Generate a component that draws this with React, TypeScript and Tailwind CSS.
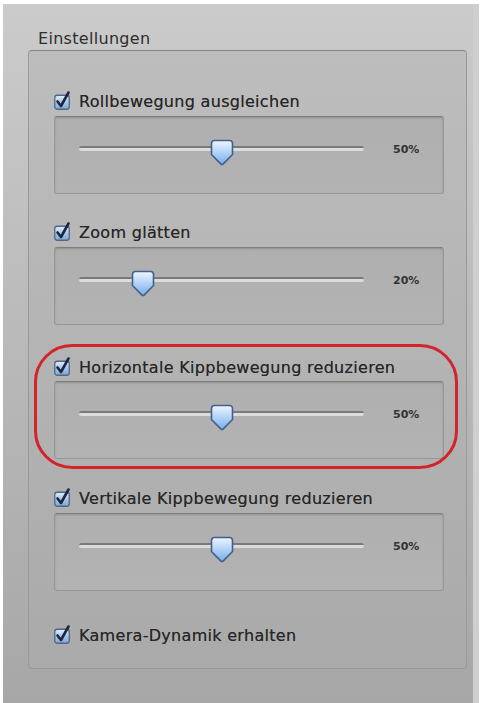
import React from "react"

const font = { fontFamily: '"DejaVu Sans", "Liberation Sans", sans-serif' }

function CheckBox() {
  return (
    <svg width="16" height="18" viewBox="0 0 16 18" className="overflow-visible shrink-0">
      <defs>
        <linearGradient id="cbfill" x1="0" y1="0" x2="0" y2="1">
          <stop offset="0" stopColor="#e3eefa" />
          <stop offset="0.5" stopColor="#a9c7e8" />
          <stop offset="1" stopColor="#7fa6d4" />
        </linearGradient>
      </defs>
      <rect x="0.75" y="3.25" width="14.5" height="14" rx="2.5" fill="url(#cbfill)" stroke="#4f6788" strokeWidth="1.3" />
      <path d="M3.5 9.5 L7 14 L14.5 0.5" fill="none" stroke="#1c2640" strokeWidth="2.6" strokeLinecap="round" strokeLinejoin="round" />
    </svg>
  )
}

function Thumb() {
  return (
    <svg width="24" height="27" viewBox="0 0 24 27">
      <defs>
        <linearGradient id="thfill" x1="0" y1="0" x2="0" y2="1">
          <stop offset="0" stopColor="#eef6ff" />
          <stop offset="0.45" stopColor="#b7d6f7" />
          <stop offset="1" stopColor="#78aeea" />
        </linearGradient>
      </defs>
      <path
        d="M4.5 1.5 H19.5 Q22.5 1.5 22.5 4.5 V15.5 L13.3 24.8 Q12 26 10.7 24.8 L1.5 15.5 V4.5 Q1.5 1.5 4.5 1.5 Z"
        fill="url(#thfill)"
        stroke="#44608a"
        strokeWidth="1.6"
      />
    </svg>
  )
}

// slider inside its own recessed box; the thumb sits over the track
function SliderBox({ value, className }: { value: number; className: string }) {
  return (
    <div
      className={`ml-[25px] h-[78px] w-[390px] rounded-[3px] border border-[#979797] border-t-[#7e7e7e] bg-gradient-to-b from-[#afafaf] to-[#b3b3b3] shadow-[inset_0_1px_2px_rgba(0,0,0,0.18)] flex items-start pt-[22px] pl-[24px] ${className}`}
    >
      <div className="relative w-[285px] h-[27px] pt-[7px]">
        <div className="h-[5px] rounded-full border-t-2 border-[#7a7a7a] bg-[#dcdcdc]" />
        <div className="absolute top-0" style={{ left: `calc(${value / 100} * (100% - 24px))` }}>
          <Thumb />
        </div>
      </div>
      <span className="ml-[29px] mt-[4px] text-[11px] font-bold text-[#333] leading-[14px]">{value}%</span>
    </div>
  )
}

function Row({ label, className }: { label: string; className: string }) {
  return (
    <div className={`ml-[25px] h-[20px] flex items-center gap-[9px] ${className}`}>
      <CheckBox />
      <span className="text-[16px] tracking-[0.3px] leading-[20px] text-[#262626] mt-[2px] [text-shadow:0_0_0.6px_rgba(0,0,0,0.5)]">
        {label}
      </span>
    </div>
  )
}

export default function App() {
  return (
    <div className="w-[482px] h-[703px] bg-white pt-[4px] pl-[3px] overflow-hidden" style={font}>
      <div className="w-[476px] h-[699px] bg-gradient-to-b from-[#cbcbcb] to-[#a7a7a7] border-r-[6px] border-[#cfcfcf] pt-[26px] pl-[25px]">
        <div className="ml-[10px] text-[16px] tracking-[0.3px] leading-[18px] text-[#2e2e2e]">Einstellungen</div>
        <div className="relative mt-[2px] w-[439px] h-[619px] rounded-[4px] border border-[#999] border-t-[#858585] bg-gradient-to-b from-[#bdbdbd] to-[#aaaaaa] flex flex-col">
          <Row label="Rollbewegung ausgleichen" className="mt-[40px]" />
          <SliderBox value={50} className="mt-[5px]" />
          <Row label="Zoom glätten" className="mt-[28px]" />
          <SliderBox value={20} className="mt-[5px]" />
          <Row label="Horizontale Kippbewegung reduzieren" className="mt-[32px]" />
          <SliderBox value={50} className="mt-[4px]" />
          <Row label="Vertikale Kippbewegung reduzieren" className="mt-[29px]" />
          <SliderBox value={50} className="mt-[5px]" />
          <Row label="Kamera-Dynamik erhalten" className="mt-[34px]" />

          {/* red highlight drawn over the third group */}
          <div className="absolute left-[5px] top-[293px] w-[424px] h-[125px] rounded-[38px] border-[3px] border-[#d4242b] pointer-events-none" />
        </div>
      </div>
    </div>
  )
}
